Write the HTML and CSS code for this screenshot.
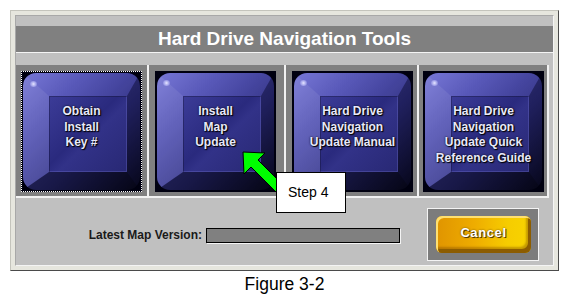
FILE: index.html
```html
<!DOCTYPE html>
<html>
<head>
<meta charset="utf-8">
<link rel="stylesheet" href="styles.css">
</head>
<body>
<div class="page">
  <div class="window">
    <div class="panel">
      <div class="title">Hard Drive Navigation Tools</div>
      <div class="tools">
        <div class="cell c1"><div class="btn focus"><div class="bevel"><div class="face"><span class="label">Obtain<br>Install<br>Key #</span></div></div></div></div>
        <div class="cell c2"><div class="btn"><div class="bevel"><div class="face"><span class="label">Install<br>Map<br>Update</span></div></div></div></div>
        <div class="cell c3"><div class="btn"><div class="bevel"><div class="face"><span class="label">Hard Drive<br>Navigation<br>Update Manual</span></div></div></div></div>
        <div class="cell c4"><div class="btn"><div class="bevel"><div class="face"><span class="label">Hard Drive<br>Navigation<br>Update Quick<br>Reference Guide</span></div></div></div></div>
      </div>
      <div class="bottom">
        <span class="version-label">Latest Map Version:</span>
        <div class="field"></div>
        <div class="cancel-frame"><div class="cancel">Cancel</div></div>
      </div>
    </div>
  </div>
  <div class="caption">Figure 3-2</div>
  <svg class="arrow" width="569" height="301" viewBox="0 0 569 301">
    <polygon points="243,152 265,153 258,160 286,188 279,195 251,167 244,174" fill="#00ff00" stroke="#000" stroke-width="1" stroke-linejoin="miter"/>
  </svg>
  <div class="callout">Step 4</div>
</div>
</body>
</html>
```
FILE: styles.css
```css
html, body {
  margin: 0;
  padding: 0;
  background: #ffffff;
}
body {
  font-family: "Liberation Sans", Arial, sans-serif;
}
.page {
  position: relative;
  width: 569px;
  height: 301px;
  padding-top: 10px;
  box-sizing: border-box;
  overflow: hidden;
}
.window {
  margin-left: 10px;
  width: 549px;
  box-sizing: border-box;
  border: 1px solid;
  border-color: #c4c4bc #4a4a4a #4a4a4a #c4c4bc;
  padding: 4px;
  background: #e6e6de;
}
.panel {
  background: #c0c0c0;
  border: 1px solid;
  border-color: #a8a8a8 #f4f4f4 #f4f4f4 #a8a8a8;
}
.title {
  margin-top: 10px;
  height: 26px;
  line-height: 26px;
  background: #808080;
  border-bottom: 1px solid #f4f4f4;
  color: #ffffff;
  font-weight: bold;
  font-size: 19px;
  text-align: center;
}
.tools {
  margin-top: 12px;
  display: grid;
  grid-template-columns: 133px 137px 133px 130px;
}
.cell {
  background: #808080;
  padding: 6px 0 4px 5px;
  border-right: 2px solid #f2f2f2;
  border-bottom: 2px solid #f2f2f2;
  box-sizing: border-box;
}
.c2, .c3 { padding-left: 6px; }
.c4 { padding-left: 4px; }
.btn {
  position: relative;
  width: 121px;
  height: 121px;
  box-sizing: border-box;
  background: #000010;
  padding: 2px;
}
.btn.focus {
  border: 1px dotted #ffffff;
  padding: 1px;
}
.btn::before {
  content: "";
  position: absolute;
  left: 8px;
  top: 9px;
  width: 7px;
  height: 6px;
  border-radius: 50%;
  background: radial-gradient(circle, #e6e6ff 0%, rgba(200,200,255,0.6) 50%, rgba(200,200,255,0) 100%);
  z-index: 2;
}
.bevel {
  height: 100%;
  box-sizing: border-box;
  border-radius: 13px;
  border-style: solid;
  border-width: 23px 13px 18px 26px;
  border-color: rgba(255,255,255,0.05) rgba(0,0,0,0.3) rgba(0,0,0,0.45) rgba(255,255,255,0.12);
  background: linear-gradient(135deg, #7070d4 0%, #4c4cb0 30%, #2e2e86 60%, #0a0a26 100%);
  background-origin: border-box;
  display: flex;
}
.face {
  flex: 1;
  background: linear-gradient(135deg, #3c3c98 0%, #2a2a7e 45%, #323288 55%, #282874 100%);
  box-shadow: inset 1px 1px 0 rgba(0,0,0,0.25), inset -1px -1px 0 rgba(160,160,255,0.2);
  display: flex;
  justify-content: center;
}
.label {
  display: block;
  margin: 8px -8px 0 -21px;
  flex: 1;
  text-align: center;
  color: #e8e8fa;
  font-weight: bold;
  font-size: 12px;
  line-height: 15.5px;
  text-shadow: 1px 1px 1px #000, 0 0 2px #000;
  white-space: nowrap;
}
.bottom {
  display: flex;
  align-items: center;
  justify-content: flex-end;
  padding: 10px 14px 4px 0;
}
.version-label {
  font-weight: bold;
  font-size: 12px;
  color: #1a1a1a;
  margin-top: 1px;
}
.field {
  margin-left: 4px;
  margin-top: 1px;
  width: 194px;
  height: 15px;
  box-sizing: border-box;
  background: #808080;
  border: 1px solid #000;
  box-shadow: 1px 1px 0 #f4f4f4;
}
.cancel-frame {
  margin-left: 27px;
  background: #7c7c7c;
  border: 1px solid #f4f4f4;
  padding: 7px 7px 7px 8px;
}
.cancel {
  width: 95px;
  height: 37px;
  box-sizing: border-box;
  border-radius: 6px;
  background: linear-gradient(90deg, #e09400 0%, #eeac00 40%, #f6cc00 75%, #f8d400 100%);
  box-shadow: inset 2px 2px 0 #ffe070, inset -3px -4px 0 #8c5c00, inset -5px -6px 2px rgba(120,70,0,0.4);
  color: #ffffff;
  font-weight: bold;
  font-size: 13px;
  line-height: 34px;
  text-align: center;
  letter-spacing: 0.6px;
  text-shadow: 1px 1px 0 #5a3c00, 0 0 2px #6a4a00;
}
.caption {
  margin-top: 4px;
  text-align: center;
  font-size: 17.5px;
  line-height: 18px;
  color: #000;
}
.arrow {
  position: absolute;
  left: 0;
  top: 0;
  pointer-events: none;
}
.callout {
  position: absolute;
  left: 276px;
  top: 172px;
  width: 70px;
  height: 41px;
  box-sizing: border-box;
  background: #fff;
  border: 1px solid #000;
  font-size: 14px;
  line-height: 39px;
  padding-left: 11px;
  color: #000;
}
```
